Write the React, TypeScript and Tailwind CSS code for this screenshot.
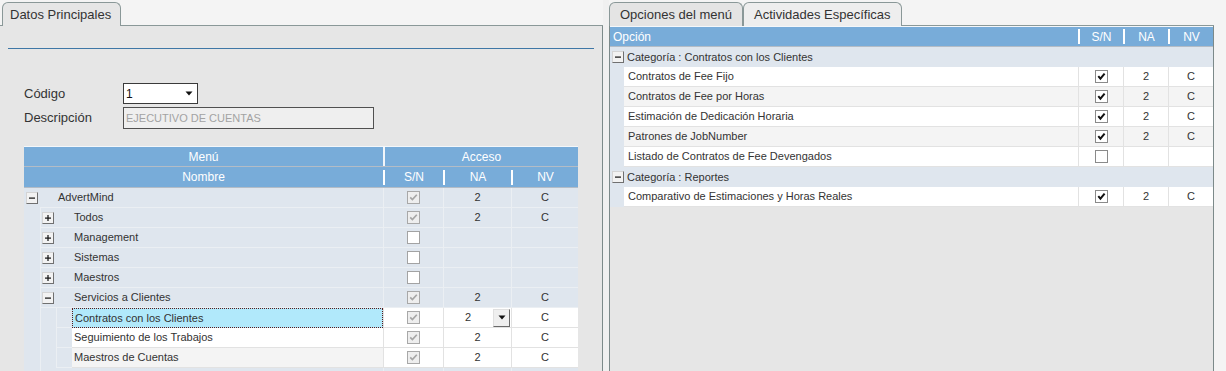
import React from "react";

const FONT = "font-['Liberation_Sans',Arial,sans-serif]";

function TreeBtn({ sign }: { sign: "+" | "-" }) {
  return (
    <span className="flex h-[12px] w-[12px] shrink-0 items-center justify-center border border-[#707070] border-l-[#d4d4d4] border-t-[#d4d4d4] bg-[#f2f2f2]">
      <svg width="8" height="8" viewBox="0 0 8 8">
        <rect x="1" y="3.5" width="6" height="1.2" fill="#111" />
        {sign === "+" && <rect x="3.4" y="1" width="1.2" height="6" fill="#111" />}
      </svg>
    </span>
  );
}

function GrayCheck({ checked }: { checked: boolean }) {
  if (!checked)
    return <span className="block h-[13px] w-[13px] border border-[#a3a3a3] bg-white" />;
  return (
    <span className="flex h-[13px] w-[13px] items-center justify-center border border-[#a8a8a8] bg-[#eeeeee]">
      <svg width="9" height="9" viewBox="0 0 9 9">
        <path d="M1.2 4.4 L3.4 6.6 L7.8 1.8" stroke="#a6a6a6" strokeWidth="1.7" fill="none" />
      </svg>
    </span>
  );
}

function BlackCheck({ checked }: { checked: boolean }) {
  return (
    <span className="flex h-[13px] w-[13px] items-center justify-center border border-[#8a8a8a] bg-white">
      {checked && (
        <svg width="9" height="9" viewBox="0 0 9 9">
          <path d="M1.3 4.2 L3.4 6.6 L7.6 1.6" stroke="#111" strokeWidth="2" fill="none" />
        </svg>
      )}
    </span>
  );
}

type TreeRow = {
  level: 0 | 1 | 2;
  label: string;
  btn?: "+" | "-";
  check: boolean;
  na?: string;
  nv?: string;
  kind?: "sel" | "white" | "gray";
};

const treeRows: TreeRow[] = [
  { level: 0, label: "AdvertMind", btn: "-", check: true, na: "2", nv: "C" },
  { level: 1, label: "Todos", btn: "+", check: true, na: "2", nv: "C" },
  { level: 1, label: "Management", btn: "+", check: false },
  { level: 1, label: "Sistemas", btn: "+", check: false },
  { level: 1, label: "Maestros", btn: "+", check: false },
  { level: 1, label: "Servicios a Clientes", btn: "-", check: true, na: "2", nv: "C" },
  { level: 2, label: "Contratos con los Clientes", check: true, na: "2", nv: "C", kind: "sel" },
  { level: 2, label: "Seguimiento de los Trabajos", check: true, na: "2", nv: "C", kind: "white" },
  { level: 2, label: "Maestros de Cuentas", check: true, na: "2", nv: "C", kind: "gray" },
];

function LeftRow({ r }: { r: TreeRow }) {
  const white = r.level === 2;
  const cellLine = white ? "border-[#e2e2e2]" : "border-[#ebeff3]";
  const accBg = white ? "bg-white" : "bg-[#dfe6ee]";
  let nameCell: React.ReactNode;
  if (r.level === 0) {
    nameCell = (
      <div className="flex bg-[#dfe6ee]">
        <div className="flex w-[16px] items-center pl-[2px]">
          <TreeBtn sign={r.btn!} />
        </div>
        <div className="flex flex-1 items-center border-b border-[#ebeff3] pl-[18px]">{r.label}</div>
      </div>
    );
  } else if (r.level === 1) {
    nameCell = (
      <div className="flex bg-[#dfe6ee]">
        <div className="w-[16px]" />
        <div className="flex flex-1 items-center border-b border-l border-[#ebeff3] pl-[1px]">
          <TreeBtn sign={r.btn!} />
          <span className="ml-[20px]">{r.label}</span>
        </div>
      </div>
    );
  } else {
    const nameBg =
      r.kind === "sel"
        ? "bg-[#b1e9fb] border border-dotted border-[#5b1a1a]"
        : r.kind === "white"
        ? "bg-white border-b border-[#e2e2e2]"
        : "bg-[#f4f4f4] border-b border-[#e2e2e2]";
    nameCell = (
      <div className="flex bg-[#dfe6ee]">
        <div className="w-[16px]" />
        <div className="w-[16px] border-l border-[#ebeff3]" />
        <div className="w-[16px] border-b border-l border-[#ebeff3]" />
        <div className={`flex flex-1 items-center pl-[2px] ${nameBg}`}>{r.label}</div>
      </div>
    );
  }
  return (
    <div className="grid h-[20px] grid-cols-[359px_60px_68px_67px]">
      {nameCell}
      <div className={`flex items-center justify-center border-b border-l ${cellLine} ${accBg}`}>
        <GrayCheck checked={r.check} />
      </div>
      {r.kind === "sel" ? (
        <div className={`flex items-center border-b border-l ${cellLine} ${accBg}`}>
          <span className="ml-[21px] flex-1">{r.na}</span>
          <span className="mr-[1px] flex h-[18px] w-[17px] items-center justify-center border border-[#6a6a6a] border-l-[#e0e0e0] border-t-[#e0e0e0] bg-[#efefef]">
            <svg width="8" height="5" viewBox="0 0 8 5">
              <path d="M0.5 0.5 L7.5 0.5 L4 4.5 Z" fill="#111" />
            </svg>
          </span>
        </div>
      ) : (
        <div className={`flex items-center justify-center border-b border-l ${cellLine} ${accBg}`}>{r.na}</div>
      )}
      <div className={`flex items-center justify-center border-b border-l ${cellLine} ${accBg}`}>{r.nv}</div>
    </div>
  );
}

type OptRow =
  | { cat: true; label: string }
  | { cat?: false; label: string; check: boolean; na?: string; nv?: string; bg: string };

const optRows: OptRow[] = [
  { cat: true, label: "Categoría : Contratos con los Clientes" },
  { label: "Contratos de Fee Fijo", check: true, na: "2", nv: "C", bg: "bg-white" },
  { label: "Contratos de Fee por Horas", check: true, na: "2", nv: "C", bg: "bg-[#f4f4f4]" },
  { label: "Estimación de Dedicación Horaria", check: true, na: "2", nv: "C", bg: "bg-white" },
  { label: "Patrones de JobNumber", check: true, na: "2", nv: "C", bg: "bg-[#f4f4f4]" },
  { label: "Listado de Contratos de Fee Devengados", check: false, bg: "bg-white" },
  { cat: true, label: "Categoría : Reportes" },
  { label: "Comparativo de Estimaciones y Horas Reales", check: true, na: "2", nv: "C", bg: "bg-white" },
];

function HeadSep({ label }: { label: string }) {
  return (
    <div className="flex items-center">
      <div className="h-[15px] w-[2px] bg-white" />
      <div className="flex-1 text-center">{label}</div>
    </div>
  );
}

export default function App() {
  return (
    <div className={`flex h-[371px] w-[1226px] overflow-hidden bg-[#f4f4f4] text-[11px] text-[#333] ${FONT}`}>
      {/* Left panel */}
      <div className="flex w-[603px] flex-col">
        <div className="flex h-[26px] shrink-0 items-end">
          <div className="h-[24px] w-[2px] border-b border-[#8a9898]" />
          <div className="h-[24px] w-[119px] rounded-t-[6px] border border-b-0 border-[#8a9898] bg-[#e6e6e6] pl-[7px] text-[13px] leading-[23px]">
            Datos Principales
          </div>
          <div className="h-[24px] flex-1 border-b border-[#8a9898]" />
        </div>
        <div className="flex flex-1 flex-col border-r border-[#7c8a8a] bg-[#e6e6e6]">
          <div className="mx-[8px] mt-[22px] h-[1px] shrink-0 bg-[#3f77a6]" />
          <div className="mt-[34px] flex flex-col gap-[3px] pl-[24px] text-[13px]">
            <div className="flex h-[21px] items-center">
              <div className="w-[99px]">Código</div>
              <div className="flex h-[21px] w-[75px] items-center border border-[#3a3a3a] bg-white pl-[2px] text-[12px] text-[#111]">
                <span className="flex-1">1</span>
                <svg className="mr-[4px]" width="8" height="5" viewBox="0 0 8 5">
                  <path d="M0.5 0.5 L7.5 0.5 L4 4.5 Z" fill="#111" />
                </svg>
              </div>
            </div>
            <div className="flex h-[22px] items-center">
              <div className="w-[99px]">Descripción</div>
              <div className="flex h-[22px] w-[251px] items-center border border-[#505050] bg-[#efefef] pl-[2px] text-[11px] text-[#a3a3a3]">
                EJECUTIVO DE CUENTAS
              </div>
            </div>
          </div>
          <div className="ml-[24px] mt-[17px] w-[554px]">
            <div className="grid h-[20px] grid-cols-[359px_195px] border-t border-[#f4f7fa] bg-[#78acd9] text-[12px] text-white">
              <div className="flex items-center justify-center">Menú</div>
              <div className="flex items-center justify-center border-l-2 border-[#f2f6fa]">Acceso</div>
            </div>
            <div className="h-[1px] bg-[#b3bcc6]" />
            <div className="grid h-[20px] grid-cols-[359px_60px_68px_67px] bg-[#78acd9] text-[12px] text-white">
              <div className="flex items-center justify-center">Nombre</div>
              <HeadSep label="S/N" />
              <HeadSep label="NA" />
              <HeadSep label="NV" />
            </div>
            <div className="h-[1px] bg-[#b3bcc6]" />
            {treeRows.map((r) => (
              <LeftRow key={r.label} r={r} />
            ))}
            <div className="grid h-[20px] grid-cols-[359px_60px_68px_67px] bg-[#dfe6ee]">
              <div className="flex">
                <div className="w-[16px]" />
                <div className="flex-1 border-l border-[#ebeff3]" />
              </div>
              <div className="border-l border-[#ebeff3]" />
              <div className="border-l border-[#ebeff3]" />
              <div className="border-l border-[#ebeff3]" />
            </div>
          </div>
        </div>
      </div>

      <div className="w-[6px] bg-[#f0f0f0]" />

      {/* Right panel */}
      <div className="flex w-[605px] flex-col">
        <div className="flex h-[26px] shrink-0 items-end text-[13px]">
          <div className="h-[24px] w-[134px] rounded-t-[6px] border border-b-0 border-[#8a9898] bg-[#e4e4e4] pl-[10px] leading-[24px]">
            Opciones del menú
          </div>
          <div className="h-[24px] w-[159px] rounded-t-[6px] border border-b-0 border-[#8a9898] bg-[#eeeeee] pl-[10px] leading-[24px]">
            Actividades Específicas
          </div>
          <div className="h-[24px] flex-1 border-b border-[#8a9898]" />
        </div>
        <div className="flex flex-1 flex-col border-l border-r border-[#7c8a8a] bg-[#e6e6e6]">
          <div className="grid h-[20px] grid-cols-[468px_45px_45px_45px] border-t border-[#f4f7fa] bg-[#78acd9] text-[12px] text-white">
            <div className="flex items-center pl-[3px]">Opción</div>
            <HeadSep label="S/N" />
            <HeadSep label="NA" />
            <HeadSep label="NV" />
          </div>
          <div className="h-[1px] bg-[#b3bcc6]" />
          {optRows.map((r) =>
            r.cat ? (
              <div key={r.label} className="flex h-[20px] items-center bg-[#dfe6ee] pl-[2px]">
                <TreeBtn sign="-" />
                <span className="ml-[3px]">{r.label}</span>
              </div>
            ) : (
              <div key={r.label} className="grid h-[20px] grid-cols-[14px_454px_45px_45px_45px]">
                <div className="bg-[#dfe6ee]" />
                <div className={`flex items-center border-b border-[#e2e2e2] pl-[4px] ${r.bg}`}>{r.label}</div>
                <div className={`flex items-center justify-center border-b border-l border-[#e2e2e2] ${r.bg}`}>
                  <BlackCheck checked={r.check} />
                </div>
                <div className={`flex items-center justify-center border-b border-l border-[#e2e2e2] ${r.bg}`}>{r.na}</div>
                <div className={`flex items-center justify-center border-b border-l border-[#e2e2e2] ${r.bg}`}>{r.nv}</div>
              </div>
            )
          )}
        </div>
      </div>
    </div>
  );
}
